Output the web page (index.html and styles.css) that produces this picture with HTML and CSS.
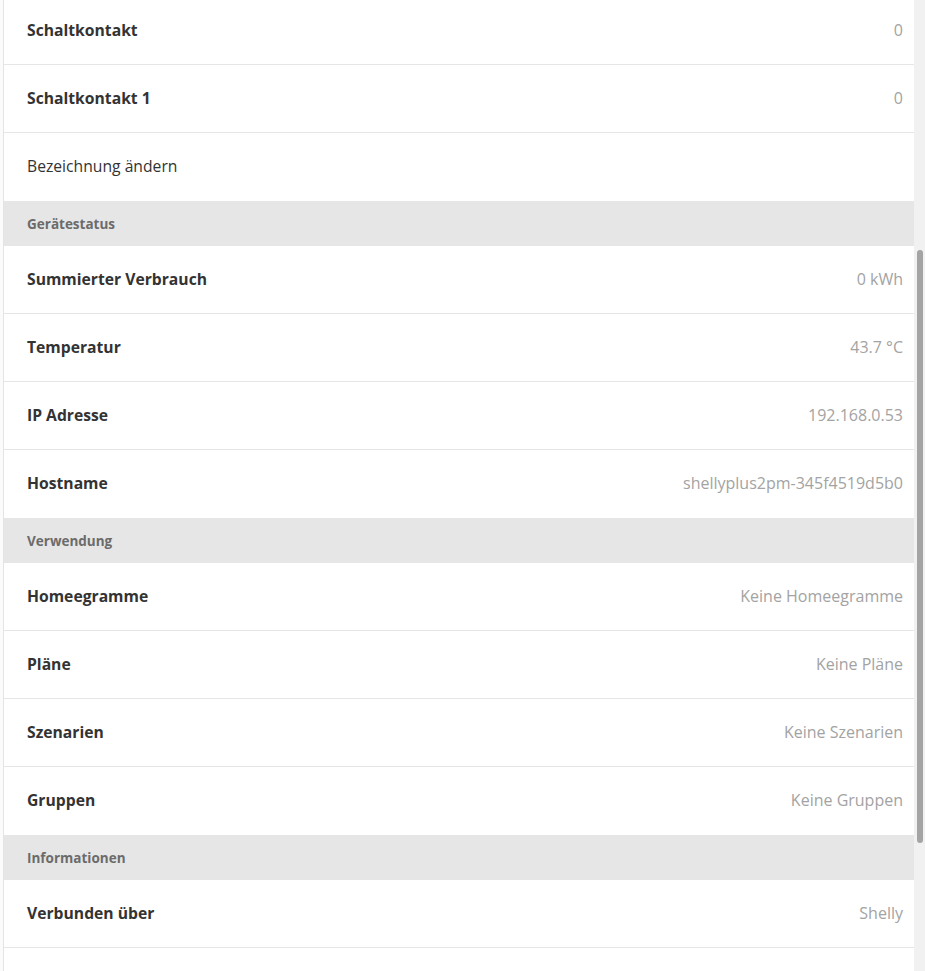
FILE: index.html
```html
<!DOCTYPE html>
<html lang="de">
<head>
<meta charset="utf-8">
<link rel="stylesheet" href="styles.css">
</head>
<body>
<div class="page">
  <div class="strip"></div>
  <main class="panel">
    <div class="list">
      <div class="row"><span class="label">Schaltkontakt</span><span class="value">0</span></div>
      <div class="row"><span class="label">Schaltkontakt 1</span><span class="value">0</span></div>
      <div class="row last"><span class="action">Bezeichnung ändern</span></div>
      <div class="section">Gerätestatus</div>
      <div class="row"><span class="label">Summierter Verbrauch</span><span class="value">0 kWh</span></div>
      <div class="row"><span class="label">Temperatur</span><span class="value">43.7 °C</span></div>
      <div class="row"><span class="label">IP Adresse</span><span class="value">192.168.0.53</span></div>
      <div class="row last"><span class="label">Hostname</span><span class="value">shellyplus2pm-345f4519d5b0</span></div>
      <div class="section">Verwendung</div>
      <div class="row"><span class="label">Homeegramme</span><span class="value">Keine Homeegramme</span></div>
      <div class="row"><span class="label">Pläne</span><span class="value">Keine Pläne</span></div>
      <div class="row"><span class="label">Szenarien</span><span class="value">Keine Szenarien</span></div>
      <div class="row last"><span class="label">Gruppen</span><span class="value">Keine Gruppen</span></div>
      <div class="section">Informationen</div>
      <div class="row"><span class="label">Verbunden über</span><span class="value">Shelly</span></div>
      <div class="row"><span class="label"></span><span class="value"></span></div>
    </div>
  </main>
  <div class="scrollbar"><div class="thumb"></div></div>
</div>
</body>
</html>
```

FILE: styles.css
```css
html, body {
  margin: 0;
  padding: 0;
  height: 100%;
  overflow: hidden;
  background: #ffffff;
  font-family: "Open Sans", "Noto Sans", sans-serif;
}

.page {
  display: flex;
  height: 971px;
  overflow: hidden;
}

.strip {
  width: 3px;
  flex: none;
  background: #fbfbfb;
  border-right: 1px solid #e4e4e4;
}

.panel {
  flex: 1;
  background: #ffffff;
  overflow: hidden;
}

.list {
  margin-top: -3px;
}

.row {
  box-sizing: border-box;
  height: 68px;
  display: flex;
  align-items: center;
  justify-content: space-between;
  padding: 0 11px 2px 23px;
  border-bottom: 1px solid #e6e6e6;
}

.row.last {
  border-bottom: none;
}

.label {
  font-size: 15.7px;
  font-weight: 700;
  color: #333333;
}

.action {
  font-size: 15.7px;
  font-weight: 400;
  color: #333333;
}

.value {
  font-size: 16px;
  font-weight: 400;
  color: #a3a3a3;
}

.section {
  height: 45px;
  display: flex;
  align-items: center;
  padding-left: 23px;
  background: #e6e6e6;
  font-size: 13.5px;
  font-weight: 700;
  color: #6b6b6b;
}

.scrollbar {
  width: 11px;
  flex: none;
  background: #f1f1f1;
  padding-top: 250px;
  box-sizing: border-box;
  display: flex;
  justify-content: center;
}

.thumb {
  width: 6px;
  height: 593px;
  margin-left: 1px;
  background: #a4a4a4;
  border-radius: 3px;
}
```
